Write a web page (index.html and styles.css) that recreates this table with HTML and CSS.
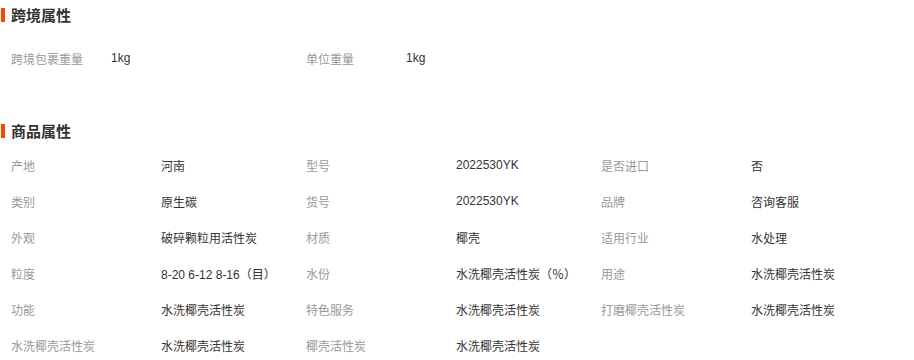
FILE: index.html
```html
<!DOCTYPE html>
<html lang="zh-CN">
<head>
<meta charset="utf-8">
<title>属性</title>
<link rel="stylesheet" href="styles.css">
</head>
<body>
<section class="attr-block">
  <h2 class="attr-title">跨境属性</h2>
  <div class="attr-grid cross">
    <div class="cell"><span class="label">跨境包裹重量</span><span class="value">1kg</span></div>
    <div class="cell"><span class="label">单位重量</span><span class="value">1kg</span></div>
  </div>
</section>
<section class="attr-block goods">
  <h2 class="attr-title">商品属性</h2>
  <div class="attr-grid">
    <div class="cell"><span class="label">产地</span><span class="value">河南</span></div>
    <div class="cell"><span class="label">型号</span><span class="value">2022530YK</span></div>
    <div class="cell"><span class="label">是否进口</span><span class="value">否</span></div>
    <div class="cell"><span class="label">类别</span><span class="value">原生碳</span></div>
    <div class="cell"><span class="label">货号</span><span class="value">2022530YK</span></div>
    <div class="cell"><span class="label">品牌</span><span class="value">咨询客服</span></div>
    <div class="cell"><span class="label">外观</span><span class="value">破碎颗粒用活性炭</span></div>
    <div class="cell"><span class="label">材质</span><span class="value">椰壳</span></div>
    <div class="cell"><span class="label">适用行业</span><span class="value">水处理</span></div>
    <div class="cell"><span class="label">粒度</span><span class="value">8-20 6-12 8-16（目）</span></div>
    <div class="cell"><span class="label">水份</span><span class="value">水洗椰壳活性炭（％）</span></div>
    <div class="cell"><span class="label">用途</span><span class="value">水洗椰壳活性炭</span></div>
    <div class="cell"><span class="label">功能</span><span class="value">水洗椰壳活性炭</span></div>
    <div class="cell"><span class="label">特色服务</span><span class="value">水洗椰壳活性炭</span></div>
    <div class="cell"><span class="label">打磨椰壳活性炭</span><span class="value">水洗椰壳活性炭</span></div>
    <div class="cell"><span class="label">水洗椰壳活性炭</span><span class="value">水洗椰壳活性炭</span></div>
    <div class="cell"><span class="label">椰壳活性炭</span><span class="value">水洗椰壳活性炭</span></div>
  </div>
</section>
</body>
</html>
```

FILE: styles.css
```css
html, body {
  margin: 0;
  padding: 0;
  background: #ffffff;
}
body {
  font-family: "Liberation Sans", "Noto Sans CJK SC", sans-serif;
  font-size: 12px;
  color: #333333;
}
.attr-block {
  padding-left: 11px;
}
.attr-block.goods {
  margin-top: 40px;
}
.attr-title {
  position: relative;
  margin: 0;
  height: 30px;
  line-height: 30px;
  font-size: 15px;
  font-weight: bold;
  color: #333333;
  font-family: "Noto Sans CJK SC", sans-serif;
}
.attr-title::before {
  content: "";
  position: absolute;
  left: -10px;
  top: 8px;
  width: 4px;
  height: 14px;
  background: #ff4400;
}
.attr-grid {
  display: grid;
  grid-template-columns: repeat(3, 295px);
  margin-top: 1px;
}
.attr-grid.cross {
  margin-top: 10px;
}
.cell {
  display: flex;
  height: 36px;
  align-items: center;
  white-space: nowrap;
}
.label {
  width: 150px;
  flex: none;
  color: #999999;
}
.cross .label {
  width: 100px;
}
.value {
  color: #333333;
}
```
